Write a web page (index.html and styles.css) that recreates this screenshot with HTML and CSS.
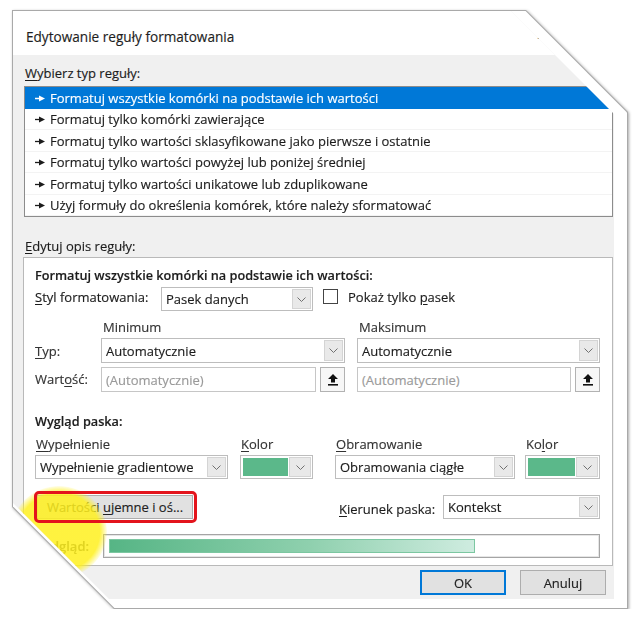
FILE: index.html
```html
<!DOCTYPE html>
<html lang="pl">
<head>
<meta charset="utf-8">
<title>Edytowanie reguły formatowania</title>
<link rel="stylesheet" href="styles.css">
</head>
<body>
<div class="frame">
  <div class="edge">
    <div class="paper">
      <div class="dialog">
        <div class="titlebar">
          <span class="title">Edytowanie reguły formatowania</span>
          <span class="mark">ı</span>
        </div>
        <div class="body">
          <div class="label"><u>W</u>ybierz typ reguły:</div>
          <ul class="rules">
            <li class="sel"><svg class="arr" width="10" height="7" viewBox="0 0 10 7"><path d="M0 3.5H5" stroke="currentColor" stroke-width="1.3"/><path d="M4 0.5L10 3.5L4 6.5Z" fill="currentColor"/></svg>Formatuj wszystkie komórki na podstawie ich wartości</li>
            <li><svg class="arr" width="10" height="7" viewBox="0 0 10 7"><path d="M0 3.5H5" stroke="currentColor" stroke-width="1.3"/><path d="M4 0.5L10 3.5L4 6.5Z" fill="currentColor"/></svg>Formatuj tylko komórki zawierające</li>
            <li><svg class="arr" width="10" height="7" viewBox="0 0 10 7"><path d="M0 3.5H5" stroke="currentColor" stroke-width="1.3"/><path d="M4 0.5L10 3.5L4 6.5Z" fill="currentColor"/></svg>Formatuj tylko wartości sklasyfikowane jako pierwsze i ostatnie</li>
            <li><svg class="arr" width="10" height="7" viewBox="0 0 10 7"><path d="M0 3.5H5" stroke="currentColor" stroke-width="1.3"/><path d="M4 0.5L10 3.5L4 6.5Z" fill="currentColor"/></svg>Formatuj tylko wartości powyżej lub poniżej średniej</li>
            <li><svg class="arr" width="10" height="7" viewBox="0 0 10 7"><path d="M0 3.5H5" stroke="currentColor" stroke-width="1.3"/><path d="M4 0.5L10 3.5L4 6.5Z" fill="currentColor"/></svg>Formatuj tylko wartości unikatowe lub zduplikowane</li>
            <li><svg class="arr" width="10" height="7" viewBox="0 0 10 7"><path d="M0 3.5H5" stroke="currentColor" stroke-width="1.3"/><path d="M4 0.5L10 3.5L4 6.5Z" fill="currentColor"/></svg>Użyj formuły do określenia komórek, które należy sformatować</li>
          </ul>
          <div class="label label2"><u>E</u>dytuj opis reguły:</div>
          <div class="group">
            <div class="bold">Formatuj wszystkie komórki na podstawie ich wartości:</div>
            <div class="style-row">
              <span class="lbl-style"><u>S</u>tyl formatowania:</span>
              <div class="select w-style"><span class="val">Pasek danych</span><span class="drop"><svg width="9" height="5" viewBox="0 0 9 5"><path d="M0.5 0.5L4.5 4.5L8.5 0.5" fill="none" stroke="#707070"/></svg></span></div>
              <span class="check"></span>
              <span class="check-lbl">Pokaż tylko <u>p</u>asek</span>
            </div>
            <div class="minmax">
              <span></span>
              <span class="cap">Minimum</span>
              <span class="cap c3">Maksimum</span>
              <span class="lbl"><u>T</u>yp:</span>
              <div class="select"><span class="val">Automatycznie</span><span class="drop"><svg width="9" height="5" viewBox="0 0 9 5"><path d="M0.5 0.5L4.5 4.5L8.5 0.5" fill="none" stroke="#707070"/></svg></span></div>
              <div class="select c3"><span class="val">Automatycznie</span><span class="drop"><svg width="9" height="5" viewBox="0 0 9 5"><path d="M0.5 0.5L4.5 4.5L8.5 0.5" fill="none" stroke="#707070"/></svg></span></div>
              <span class="lbl">Wart<u>o</u>ść:</span>
              <div class="valrow"><div class="input">(Automatycznie)</div><span class="upbtn"><svg width="10" height="12" viewBox="0 0 10 12"><path d="M5 0L10 5H7V8.5H3V5H0Z" fill="#111"/><rect x="0" y="10" width="10" height="1.6" fill="#111"/></svg></span></div>
              <div class="valrow c3"><div class="input">(Automatycznie)</div><span class="upbtn"><svg width="10" height="12" viewBox="0 0 10 12"><path d="M5 0L10 5H7V8.5H3V5H0Z" fill="#111"/><rect x="0" y="10" width="10" height="1.6" fill="#111"/></svg></span></div>
            </div>
            <div class="bold look-title">Wygląd paska:</div>
            <div class="look">
              <span class="cap2"><u>W</u>ypełnienie</span>
              <span class="cap2 k2"><u>K</u>olor</span>
              <span class="cap2 k3"><u>O</u>bramowanie</span>
              <span class="cap2 k4">Ko<u>l</u>or</span>
              <div class="select"><span class="val">Wypełnienie gradientowe</span><span class="drop"><svg width="9" height="5" viewBox="0 0 9 5"><path d="M0.5 0.5L4.5 4.5L8.5 0.5" fill="none" stroke="#707070"/></svg></span></div>
              <div class="select color k2"><span class="swatch"></span><span class="drop"><svg width="9" height="5" viewBox="0 0 9 5"><path d="M0.5 0.5L4.5 4.5L8.5 0.5" fill="none" stroke="#707070"/></svg></span></div>
              <div class="select k3"><span class="val">Obramowania ciągłe</span><span class="drop"><svg width="9" height="5" viewBox="0 0 9 5"><path d="M0.5 0.5L4.5 4.5L8.5 0.5" fill="none" stroke="#707070"/></svg></span></div>
              <div class="select color k4"><span class="swatch"></span><span class="drop"><svg width="9" height="5" viewBox="0 0 9 5"><path d="M0.5 0.5L4.5 4.5L8.5 0.5" fill="none" stroke="#707070"/></svg></span></div>
            </div>
            <div class="btnrow">
              <div class="neg-wrap">
                <button class="btn neg">Wartości <u>u</u>jemne i oś...</button>
                <span class="hilite"></span>
                <span class="redbox"></span>
              </div>
              <div class="dir">
                <span class="dir-lbl"><u>K</u>ierunek paska:</span>
                <div class="select w-dir"><span class="val">Kontekst</span><span class="drop"><svg width="9" height="5" viewBox="0 0 9 5"><path d="M0.5 0.5L4.5 4.5L8.5 0.5" fill="none" stroke="#707070"/></svg></span></div>
              </div>
            </div>
            <div class="preview-row">
              <span class="prev-lbl">Podgląd:</span>
              <div class="preview"><span class="bar"></span></div>
            </div>
          </div>
          <div class="footer">
            <button class="btn ok">OK</button>
            <button class="btn">Anuluj</button>
          </div>
        </div>
      </div>
    </div>
  </div>
</div>
</body>
</html>
```

FILE: styles.css
```css
html, body {
  margin: 0;
  padding: 0;
  background: #ffffff;
}
body {
  font-family: "Open Sans", "Noto Sans", sans-serif;
  font-size: 13px;
  color: #1c1c1c;
  -webkit-text-stroke: 0.15px currentColor;
}
u { text-decoration: underline; text-underline-offset: 2px; }

.frame {
  margin: 10px 0 0 12px;
  width: 616px;
  height: 599px;
  filter: drop-shadow(1px 1px 1.5px rgba(0,0,0,0.35));
}
.edge {
  width: 100%;
  height: 100%;
  box-sizing: border-box;
  padding: 1px;
  background: #a9a9a9;
  clip-path: polygon(0 0, 514px 0, 616px 102px, 616px 599px, 102px 599px, 0 497px);
}
.paper {
  width: 100%;
  height: 100%;
  box-sizing: border-box;
  padding: 0 13px 9px 0;
  background: #fff;
  clip-path: polygon(0 0, 512.6px 0, 614px 101.4px, 614px 597px, 101.4px 597px, 0 495.6px);
}
.dialog {
  width: 601px;
  height: 588px;
  background: #f0f0f0;
  clip-path: polygon(0 0, 498px 0, 601px 103px, 601px 588px, 96px 588px, 0 492px);
  display: flex;
  flex-direction: column;
}

.titlebar {
  height: 44px;
  box-sizing: border-box;
  background: #fff;
  display: flex;
  align-items: center;
  justify-content: space-between;
  padding: 6px 74px 0 13px;
}
.title {
  font-size: 13.6px;
  color: #1e1e1e;
}
.mark {
  font-family: "DejaVu Serif", serif;
  font-size: 8px;
  color: #555;
}

.body {
  padding: 0 1px 0 11px;
}
.label {
  margin: 9px 0 0 1px;
  height: 18px;
  line-height: 18px;
}
.label2 { margin-top: 20px; }

.rules {
  list-style: none;
  margin: 4px 0 0 0;
  padding: 0;
  width: 589px;
  box-sizing: border-box;
  border: 1px solid #8c8c8c;
  background: #fff;
}
.rules li {
  height: 21.5px;
  line-height: 21.5px;
  padding: 1px 0 0 10px;
  box-sizing: border-box;
  display: flex;
  align-items: center;
  white-space: nowrap;
  box-shadow: inset 0 -1px 0 #f3f3f3;
}
.rules li.sel {
  background: #0078d7;
  color: #fff;
  box-shadow: none;
}
.arr {
  margin-right: 5px;
  flex: none;
}

.group {
  margin: 2px 0 0 -1px;
  width: 590px;
  box-sizing: border-box;
  border: 1px solid #b9b9b9;
  background: #fff;
  padding: 8px 12px 7px 11px;
}
.bold {
  font-weight: 600;
  height: 18px;
  line-height: 18px;
  white-space: nowrap;
  font-size: 12.7px;
}

.select {
  height: 100%;
  box-sizing: border-box;
  border: 1px solid #bdbdbd;
  background: #fff;
  display: flex;
  align-items: stretch;
}
.select .val {
  flex: 1;
  display: flex;
  align-items: center;
  padding-left: 4px;
  white-space: nowrap;
  overflow: hidden;
}
.drop {
  width: 19px;
  margin: 1px;
  background: #e9e9e9;
  border: 1px solid #d4d4d4;
  box-sizing: border-box;
  display: flex;
  align-items: center;
  justify-content: center;
  flex: none;
}

.style-row {
  margin-top: 3px;
  height: 24px;
  display: flex;
  align-items: center;
}
.lbl-style {
  width: 126px;
  margin-top: -5px;
}
.w-style {
  width: 152px;
}
.check {
  width: 15px;
  height: 15px;
  box-sizing: border-box;
  border: 1px solid #444;
  background: #fff;
  margin: -6px 10px 0 10px;
}
.check-lbl { margin-top: -5px; }

.minmax {
  margin-top: 7px;
  display: grid;
  grid-template-columns: 66px 244px 255px;
  grid-template-rows: 18px 25px 25px;
  row-gap: 2px;
}
.minmax .c3 { margin-left: 12px; }
.minmax > :nth-child(n+7) { margin-top: 2px; }
.cap {
  line-height: 18px;
  padding-left: 2px;
  color: #333;
}
.lbl {
  display: flex;
  align-items: center;
  color: #333;
}
.valrow {
  display: flex;
  gap: 4px;
  height: 100%;
}
.input {
  flex: 1;
  border: 1px solid #c6c6c6;
  background: #fff;
  color: #9a9a9a;
  display: flex;
  align-items: center;
  padding-left: 4px;
}
.upbtn {
  width: 25px;
  box-sizing: border-box;
  border: 1px solid #b2b2b2;
  background: #f7f7f7;
  display: flex;
  align-items: center;
  justify-content: center;
}

.look-title { margin-top: 22px; }
.look {
  margin-top: 5px;
  display: grid;
  grid-template-columns: 193px 85px 202px 85px;
  grid-template-rows: 18px 24px;
  row-gap: 2px;
}
.look .k2 { margin-left: 12px; }
.look .k3 { margin-left: 22px; }
.look .k4 { margin-left: 10px; }
.cap2 {
  line-height: 18px;
  padding-left: 1px;
  color: #333;
}
.color .swatch {
  flex: 1;
  margin: 2px 0 2px 2px;
  background: #5bb88a;
}
.color .drop { width: 22px; }

.btnrow {
  margin-top: 16px;
  height: 24px;
  display: flex;
  align-items: stretch;
}
.neg-wrap {
  position: relative;
  margin-left: 2px;
  width: 156px;
}
.btn {
  font: inherit;
  color: #222;
  background: #e1e1e1;
  border: 1px solid #adadad;
  padding: 0;
  margin: 0;
}
.neg {
  width: 100%;
  height: 100%;
}
.hilite {
  position: absolute;
  left: -26px;
  top: -9px;
  width: 96px;
  height: 92px;
  border-radius: 50%;
  background: radial-gradient(ellipse, rgba(255,240,30,0.85) 60%, rgba(255,240,30,0) 72%);
  z-index: 1;
  pointer-events: none;
}
.redbox {
  position: absolute;
  left: -3px;
  top: -4px;
  right: -4px;
  bottom: -4px;
  border: 3px solid #e3141c;
  border-radius: 5px;
  z-index: 2;
}
.dir {
  margin-left: auto;
  display: flex;
  align-items: stretch;
}
.dir-lbl {
  width: 106px;
  padding-left: 2px;
  box-sizing: border-box;
  display: flex;
  align-items: center;
  margin-top: 3px;
}
.w-dir { width: 157px; }

.preview-row {
  margin-top: 15px;
  height: 24px;
  display: flex;
  align-items: stretch;
}
.prev-lbl {
  width: 68px;
  display: flex;
  align-items: center;
  font-weight: 600;
  color: #333;
}
.preview {
  flex: 1;
  border: 1px solid #a5a5a5;
  box-shadow: inset 0 0 0 1px #e6e6e6;
  background: #fff;
  padding: 4px 5px;
  display: flex;
}
.bar {
  width: 366px;
  box-sizing: border-box;
  border: 1px solid #7cc7a1;
  background: linear-gradient(to right, #56b585 0%, #8fd0ae 55%, #cfece0 100%);
}

.footer {
  margin-top: 4px;
  display: flex;
  justify-content: flex-end;
  gap: 14px;
  padding-right: 7px;
}
.footer .btn {
  width: 86px;
  height: 25px;
}
.footer .ok {
  border: 2px solid #0078d7;
}
```
